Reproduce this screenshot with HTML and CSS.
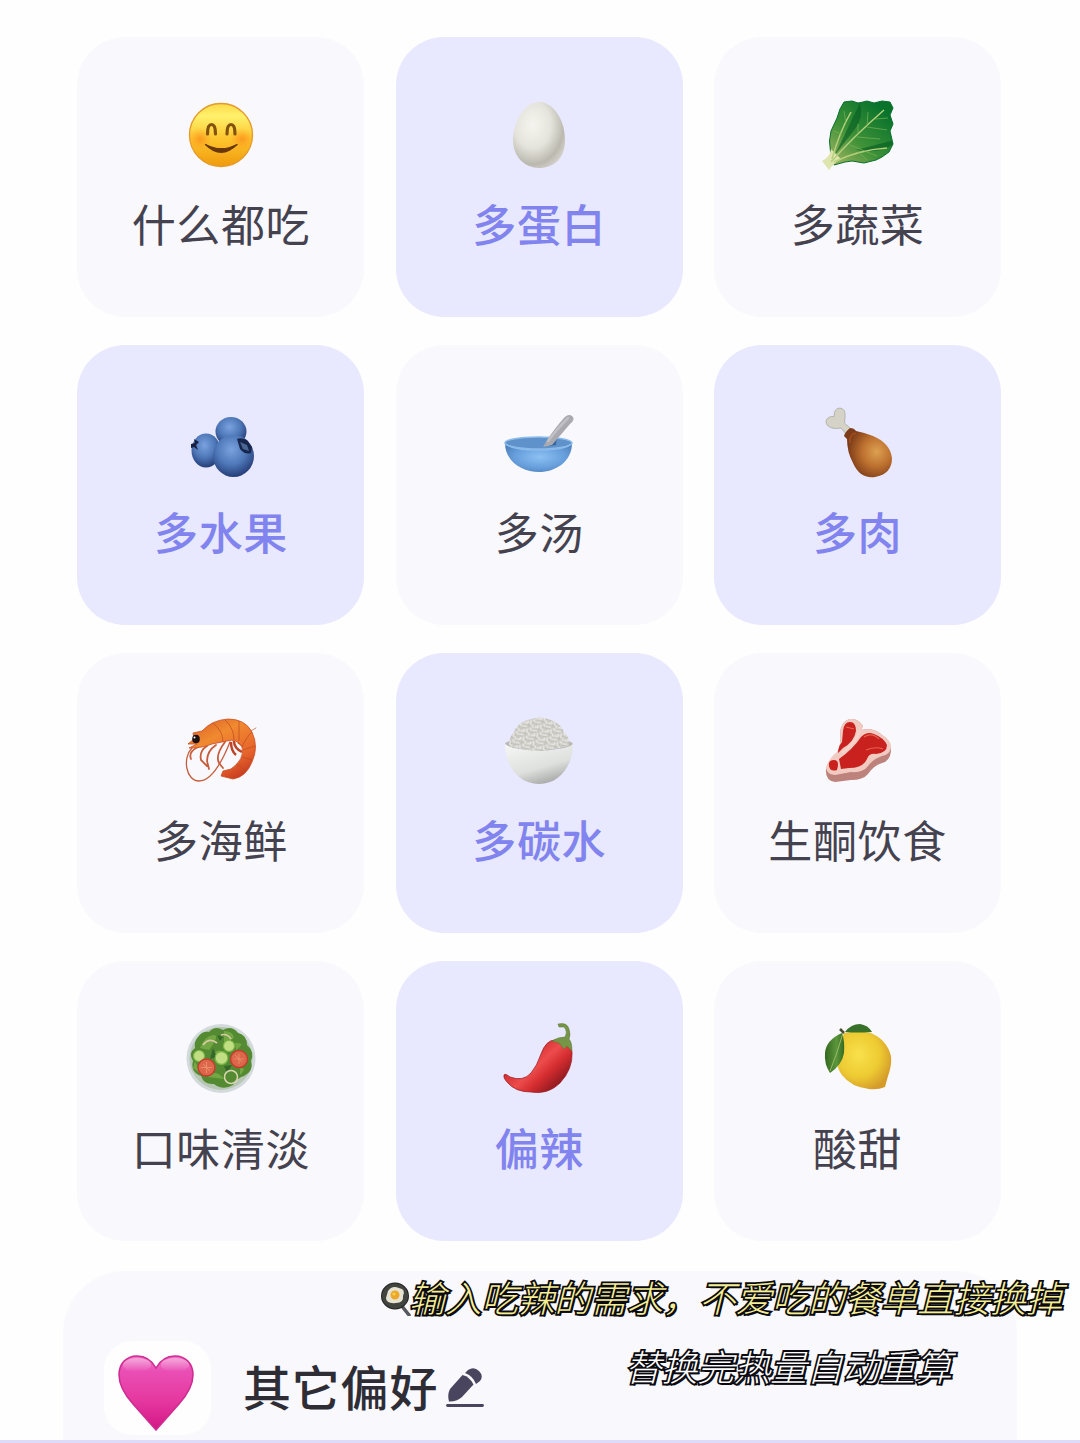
FILE: index.html
```
<!DOCTYPE html>
<html lang="zh-CN">
<head>
    <meta charset="UTF-8">
    <meta name="viewport" content="width=device-width, initial-scale=1.0">
    <title>饮食偏好</title>
    <link rel="stylesheet" href="styles.css">
</head>
<body>
    <div class="page">
        <div class="taste-grid">
            <div class="card">
                <svg class="icon" viewBox="0 0 72 72">
                    <defs>
                        <linearGradient id="face" x1="0" y1="0" x2="0" y2="1">
                            <stop offset="0" stop-color="#ffd94a"/>
                            <stop offset=".2" stop-color="#fff16c"/>
                            <stop offset=".55" stop-color="#fdc62f"/>
                            <stop offset="1" stop-color="#f09a0c"/>
                        </linearGradient>
                        <radialGradient id="blush">
                            <stop offset="0" stop-color="#fb8a1c" stop-opacity=".75"/>
                            <stop offset="1" stop-color="#ff9a1c" stop-opacity="0"/>
                        </radialGradient>
                    </defs>
                    <circle cx="36" cy="36" r="31.5" fill="url(#face)" stroke="#e59a28" stroke-width="1.3"/>
                    <ellipse cx="15" cy="40" rx="12" ry="11" fill="url(#blush)"/>
                    <ellipse cx="57" cy="40" rx="12" ry="11" fill="url(#blush)"/>
                    <path d="M22.500 35q0-9.500 4-9.500t4 9.500M42 35q0-9.500 4-9.500t4 9.500" fill="none" stroke="#84520f" stroke-width="3.200" stroke-linecap="round"/>
                    <path d="M20.500 45.500Q36 61 52 45.500 36 54 20.500 45.500Z" fill="#69380a" stroke="#69380a" stroke-width="1.300" stroke-linejoin="round"/>
                </svg>
                <p>什么都吃</p>
            </div>
            <div class="card active">
                <svg class="icon" viewBox="0 0 72 72">
                    <defs>
                        <radialGradient id="egg" cx=".38" cy=".35" r=".7">
                            <stop offset="0" stop-color="#f5f4ee"/>
                            <stop offset=".5" stop-color="#e5e4dc"/>
                            <stop offset=".85" stop-color="#bbb9af"/>
                            <stop offset="1" stop-color="#cfcdc6"/>
                        </radialGradient>
                    </defs>
                    <path d="M36 3C51 3 62 22 62 41S50 69 36 69 10 58 10 41 21 3 36 3Z" fill="url(#egg)"/>
                </svg>
                <p>多蛋白</p>
            </div>
            <div class="card">
                <svg class="icon" viewBox="0 0 72 72">
                    <defs>
                        <linearGradient id="leaf" x1=".1" y1=".9" x2=".8" y2=".1">
                            <stop offset="0" stop-color="#8fae5a"/>
                            <stop offset=".4" stop-color="#3f9238"/>
                            <stop offset="1" stop-color="#09732c"/>
                        </linearGradient>
                    </defs>
                    <path d="M8.500 53L7.500 42 9 32 15 19 18 10 22 3 30 2 36 4 41 3 45 2 52 4 60 2 68 3 71 9 68 16 71 25 68 32 71 45 67 53 60 58 54 61 42 64 30 62 23 63 12 66Z" fill="url(#leaf)" stroke="#08702b" stroke-width="1" stroke-linejoin="round"/>
                    <path d="M38 4Q42 18 33 30L12 57Q23 36 30 20ZM71 45Q60 55 34 51L69 42Z" fill="#075f24" opacity=".65"/>
                    <path d="M0 62Q8 58 9 50L19 60Q11 65 7 71Z" fill="#dfe5ae"/>
                    <path d="M9 63Q30 39 62 11M10 60Q17 34 29 13M12 63Q36 51 65 49" fill="none" stroke="#b4d07c" stroke-width="1.500"/>
                    <path d="M36 36L36 25M45 27L46 13M53 20L66 19M45 28L65 31M35 38L58 40M28 46L55 57M19 35L12 32M24 24L22 12M36 53L45 61" fill="none" stroke="#7bb256" stroke-width=".7"/>
                </svg>
                <p>多蔬菜</p>
            </div>

            <div class="card active">
                <svg class="icon" viewBox="0 0 72 72">
                    <defs>
                        <radialGradient id="berry" cx=".45" cy=".35" r=".65">
                            <stop offset="0" stop-color="#7aa2de"/>
                            <stop offset=".55" stop-color="#4f78b9"/>
                            <stop offset="1" stop-color="#263e78"/>
                        </radialGradient>
                    </defs>
                    <ellipse cx="46" cy="24.500" rx="15.500" ry="14.500" fill="url(#berry)"/>
                    <ellipse cx="21" cy="43.500" rx="14.500" ry="17" fill="url(#berry)"/>
                    <path d="M6 37l4-1-1-4 5 3-3 3 2 5-4-3-3 1Z" fill="#16203f"/>
                    <ellipse cx="48.500" cy="49" rx="20.500" ry="21" fill="url(#berry)"/>
                    <path d="M52 32Q56 30 62 33L67 40 66 46Q60 48 55 42Z" fill="#17264c"/>
                    <path d="M55 35l7 3 2 6-6-2Z" fill="#4a6693"/>
                </svg>
                <p>多水果</p>
            </div>
            <div class="card">
                <svg class="icon" viewBox="0 0 72 72">
                    <defs>
                        <radialGradient id="bowl" cx=".52" cy=".48" r=".62">
                            <stop offset="0" stop-color="#8cc1f3"/>
                            <stop offset=".6" stop-color="#679fdc"/>
                            <stop offset="1" stop-color="#4d7eb8"/>
                        </radialGradient>
                    </defs>
                    <path d="M2 36C2 55 20 65 36 65S69 55 69 36Z" fill="url(#bowl)"/>
                    <ellipse cx="35.500" cy="36" rx="33.500" ry="6" fill="#5f92cb" stroke="#8abbea" stroke-width="1.500"/>
                    <path d="M46 39L54 28 53 38Z" fill="#39669b"/>
                    <path d="M40 40Q47 27 60 12 65 6 69 9T67 17L49 38Z" fill="#aaa9b0"/>
                    <path d="M45 34Q54 22 65 11" fill="none" stroke="#c0bfc5" stroke-width="2.500" stroke-linecap="round"/>
                    <path d="M3 37Q10 43 36 43T68 37" fill="none" stroke="#8abbea" stroke-width="1.500"/>
                </svg>
                <p>多汤</p>
            </div>
            <div class="card active">
                <svg class="icon" viewBox="0 0 72 72">
                    <defs>
                        <radialGradient id="meat" cx=".68" cy=".48" r=".6">
                            <stop offset="0" stop-color="#dda052"/>
                            <stop offset=".5" stop-color="#bd712f"/>
                            <stop offset="1" stop-color="#7c3b19"/>
                        </radialGradient>
                    </defs>
                    <path d="M25 28L19 21Q14 22 10 21 4 19 4 14.500 5 9 12 9.500 12 1 18 1 24 2 23 10L22.500 16 31 24Z" fill="#d5d3c7" stroke="#aba99f" stroke-width=".8"/>
                    <path d="M28 21Q32 21 34 24 44 26 51 29 68 36 70 51 70 67 53 70 38 72 31 56 25 45 25 32L22 29Q23 25 28 21Z" fill="url(#meat)"/>
                    <path d="M34 26Q27 27 28 36" fill="none" stroke="#9b4a1d" stroke-width="2"/>
                </svg>
                <p>多肉</p>
            </div>

            <div class="card">
                <svg class="icon" viewBox="0 0 72 72">
                    <defs>
                        <linearGradient id="shrimp" x1=".2" y1="0" x2=".8" y2="1">
                            <stop offset="0" stop-color="#dc6428"/>
                            <stop offset=".3" stop-color="#f08a30"/>
                            <stop offset=".7" stop-color="#e7652b"/>
                            <stop offset="1" stop-color="#c43820"/>
                        </linearGradient>
                    </defs>
                    <g fill="none" stroke="#c65e3e" stroke-width="1.300" stroke-linecap="round">
                        <path d="M7 33C-3 43 1 66 14 66S37 47 45 27"/>
                        <path d="M13 32Q3 37 6 44M22 31Q14 36 16 45L22 51M31 30Q22 36 22 46L24 54M40 27Q30 40 34 48L38 53" stroke-width="1.800"/>
                        <path d="M60 19L71 13" stroke-width=".7"/>
                    </g>
                    <path d="M46 27Q46 36 51 40M49 26Q49 33 57 37M53 27L60 32" stroke="#bd4326" stroke-width="2.500" fill="none"/>
                    <path d="M3 29L9 24 8 18 17 16Q27 5 43 4 60 4 67 17 74 32 67 47 61 62 48 64L36 61 38 56 46 54Q60 44 57 32 52 23 42 26L27 29Q18 33 4 33L12 29Z" fill="url(#shrimp)" stroke="#cc4d23" stroke-width=".8" stroke-linejoin="round"/>
                    <path d="M28 8Q38 16 38 27M40 5Q49 13 49 25M54 6Q54 17 54 26M67 17Q62 21 57 32M70 31L58 35M67 45L57 42M61 56L51 49" fill="none" stroke="#bd4a20" stroke-width=".7"/>
                    <ellipse cx="11" cy="24" rx="3.800" ry="4.300" fill="#1c1013"/>
                    <circle cx="9.500" cy="22.500" r="1" fill="#fff"/>
                </svg>
                <p>多海鲜</p>
            </div>
            <div class="card active">
                <svg class="icon" viewBox="0 0 72 72">
                    <defs>
                        <linearGradient id="rice-bowl" x1=".2" y1="0" x2=".7" y2="1">
                            <stop offset="0" stop-color="#f4f5f3"/>
                            <stop offset=".6" stop-color="#dde0dd"/>
                            <stop offset="1" stop-color="#a3a4a1"/>
                        </linearGradient>
                        <pattern id="grains" width="11" height="9" patternUnits="userSpaceOnUse" patternTransform="rotate(24)">
                            <rect width="11" height="9" fill="#cac9c3"/>
                            <path d="M1 2l3-1M6 3l1 3M1 7l3-1M8 1l2 1M9 6l1 2M3 4l1 1" stroke="#e9e8e3" stroke-width="1.600" stroke-linecap="round"/>
                            <path d="M1 3.500l3-1M8 4l1 1M5 7l2 1" stroke="#a9a79f" stroke-width=".6"/>
                        </pattern>
                    </defs>
                    <ellipse cx="36" cy="29" rx="34" ry="6" fill="#b9bab7"/>
                    <path d="M6 31Q6 22 11 17 15 7 25 5 37 0 48 5 59 9 61 18 67 21 66 31L36 38Z" fill="url(#grains)"/>
                    <path d="M2 29Q10 36 36 36T70 29C70 50 57 69 36 69S2 50 2 29Z" fill="url(#rice-bowl)"/>
                </svg>
                <p>多碳水</p>
            </div>
            <div class="card">
                <svg class="icon" viewBox="0 0 72 72">
                    <path d="M4 54Q8 43 15 38 20 28 18 16 21 5 28 4 36 3 41 11L39 15Q52 12 60 20 69 25 69 36 68 46 60 48 51 51 46 59 41 65 29 65L13 67Q3 66 4 54Z" fill="#bd827b"/>
                    <path d="M4 52Q8 42 15 37 20 28 18 16 21 5 28 4 36 3 41 11L39 15Q52 12 60 20 69 25 69 32 68 40 60 41 51 44 46 51 41 58 29 57L13 60Q4 59 4 52Z" fill="#f1cbc2"/>
                    <path d="M21 16Q22 7 28 7T34 16Q32 27 21 33L16 38Q16 32 20 27ZM17 44Q31 34 39 22 45 16 52 19 62 23 65 30 65 38 54 39 47 38 45 44 41 53 27 53L19 54ZM7 51Q6 45 12 45T15 55Q8 57 7 51Z" fill="#c8211e"/>
                    <path d="M42 22Q50 17 57 24M44 35Q54 31 61 34M24 12L32 14" fill="none" stroke="#e86251" stroke-width="1.100"/>
                    <path d="M38 15Q34 28 20 38" fill="none" stroke="#f6d4ca" stroke-width="2.500"/>
                </svg>
                <p>生酮饮食</p>
            </div>

            <div class="card">
                <svg class="icon" viewBox="0 0 72 72">
                    <circle cx="36" cy="35.500" r="34.500" fill="#d3dadb"/>
                    <circle cx="36" cy="35.500" r="31.500" fill="#b8c7b4"/>
                    <path d="M13 14Q17 8 24 9 30 2 38 7 47 2 53 10 62 12 62 22 70 29 66 38 69 48 59 53 52 55 48 62 38 68 29 61 19 62 16 53 5 49 8 38 3 30 10 25 9 18 13 14Z" fill="#548b32"/>
                    <path d="M15 25Q20 13 28 12T24 27ZM39 8Q48 8 49 15L39 22ZM27 32Q33 24 39 30ZM23 54Q31 45 39 56ZM55 45Q63 44 55 52ZM50 20Q62 19 51 27ZM10 38L16 51 8 45Z" fill="#72a743"/>
                    <path d="M28 25L32 34 25 36ZM39 43L47 42 42 50ZM32 12L38 14 35 18Z" fill="#34682a"/>
                    <g fill="#c1df82" stroke="#80b74a" stroke-width="1.200">
                        <circle cx="14" cy="33" r="5.500"/>
                        <circle cx="44" cy="23" r="5.500"/>
                        <circle cx="36.500" cy="35" r="6.300"/>
                    </g>
                    <g fill="#dd674a" stroke="#c43e2f" stroke-width="1.500">
                        <circle cx="21.500" cy="44.500" r="8.500"/>
                        <circle cx="54" cy="36" r="8.500"/>
                    </g>
                    <path d="M21.500 39v11M16 44.500h11M18 41l7 7M54 31v10M49 36h10M50 32l7 7" stroke="#ee9471" stroke-width=".8"/>
                    <circle cx="46" cy="54" r="6.500" fill="none" stroke="#d9d5af" stroke-width="1.500"/>
                    <path d="M18 22Q24 14 32 20M36 12Q42 10 46 16" fill="none" stroke="#d9c9a5" stroke-width="1.600"/>
                </svg>
                <p>口味清淡</p>
            </div>
            <div class="card active">
                <svg class="icon" viewBox="0 0 72 72">
                    <defs>
                        <linearGradient id="chili" x1=".2" y1=".3" x2=".8" y2=".8">
                            <stop offset="0" stop-color="#c8242a"/>
                            <stop offset=".45" stop-color="#ed4c4b"/>
                            <stop offset=".7" stop-color="#d52d30"/>
                            <stop offset="1" stop-color="#981c22"/>
                        </linearGradient>
                    </defs>
                    <path d="M1 52Q2 50 7 54 20 59 28 50 34 43 38 31 43 17 52 17 67 18 69 29 70 46 57 60 45 72 28 69 12 69 4 59 0 55 1 52Z" fill="url(#chili)" stroke="#9d2025" stroke-width=".8"/>
                    <path d="M49 18Q55 14 62 14 65 8 61 4L56 4 55 1Q64-1 66 6 68 12 66 16 69 19 69 28L64 23 61 26 56 20Z" fill="#779547" stroke="#567632" stroke-width=".5"/>
                </svg>
                <p>偏辣</p>
            </div>
            <div class="card">
                <svg class="icon" viewBox="0 0 72 72">
                    <defs>
                        <radialGradient id="lemon" cx=".4" cy=".4" r=".65">
                            <stop offset="0" stop-color="#f9e14c"/>
                            <stop offset=".6" stop-color="#edca32"/>
                            <stop offset="1" stop-color="#d49b29"/>
                        </radialGradient>
                        <linearGradient id="lemon-leaf">
                            <stop offset="0" stop-color="#34671f"/>
                            <stop offset=".6" stop-color="#5b963b"/>
                            <stop offset="1" stop-color="#356a22"/>
                        </linearGradient>
                    </defs>
                    <path d="M22 10Q37 7 49 10 65 17 69 33 70 42 66 53L63 64Q56 67 47 66 29 64 20 52 12 42 17 25Z" fill="url(#lemon)"/>
                    <path d="M23 9Q29 1 38 1 46 2 50 9Q34 10 23 9Z" fill="#39712a"/>
                    <path d="M20 10Q4 17 3 30 2 41 8 50 20 42 22 30 23 18 20 10Z" fill="url(#lemon-leaf)"/>
                    <path d="M18 6L21 10Q15 31 8 48" fill="none" stroke="#a4bd6b" stroke-width=".9"/>
                    <path d="M18 6L22 10" stroke="#4b4930" stroke-width="2.500"/>
                </svg>
                <p>酸甜</p>
            </div>
        </div>

        <div class="other">
            <div class="heart-box">
                <svg class="heart" viewBox="0 0 76 76">
                    <defs>
                        <linearGradient id="pink" x1="0" y1="0" x2="0" y2="1">
                            <stop offset="0" stop-color="#ef72c6"/>
                            <stop offset=".2" stop-color="#ea4fb5"/>
                            <stop offset=".6" stop-color="#e5389f"/>
                            <stop offset="1" stop-color="#d41685"/>
                        </linearGradient>
                        <linearGradient id="shine" x1="0" y1="0" x2="0" y2="1">
                            <stop offset="0" stop-color="#fff" stop-opacity=".4"/>
                            <stop offset="1" stop-color="#fff" stop-opacity="0"/>
                        </linearGradient>
                    </defs>
                    <path d="M38 13C43 4 49 1 57 1 68 1 75 9 75 20 75 31 69 40 61 49L38 75 15 49C7 40 1 31 1 20 1 9 8 1 19 1 27 1 33 4 38 13Z" fill="url(#pink)" stroke="#cd2b91" stroke-width="1.500"/>
                    <ellipse cx="19" cy="10" rx="14" ry="7" fill="url(#shine)"/>
                    <ellipse cx="57" cy="10" rx="14" ry="7" fill="url(#shine)"/>
                </svg>
            </div>
            <h2>其它偏好</h2>
            <svg class="pen" viewBox="0 0 38 40">
                <path d="M16.500 7Q24 9 27.500 16.500L16 29Q10 34 3 33.500 1 27 4 21Z" fill="#4a455f"/>
                <path d="M19 5L22 2Q28-2 33 3 38 8 34 13L30 16Q27 8 19 5Z" fill="#4a455f"/>
                <path d="M1.500 37.500H36.500" stroke="#4a455f" stroke-width="2.800" stroke-linecap="round"/>
            </svg>
        </div>

        <div class="caption caption-yellow">
            <svg class="pan" viewBox="0 0 30 34">
                <path d="M20 23L28 33" stroke="#55585c" stroke-width="3.500" stroke-linecap="round"/>
                <ellipse cx="14" cy="14" rx="13" ry="12.500" fill="#42453f" stroke="#20221f" stroke-width="2"/>
                <path d="M7 9Q11 3 18 6 25 7 22 14 23 21 15 21 5 22 5 16Z" fill="#e6e3d3"/>
                <circle cx="14" cy="13" r="4.500" fill="#eca928"/>
                <circle cx="13" cy="12" r="1.500" fill="#f8d156"/>
            </svg>
            <span>输入吃辣的需求，不爱吃的餐单直接换掉</span>
        </div>
        <div class="caption caption-white">替换完热量自动重算</div>
        <div class="bottom-line"></div>
    </div>
</body>
</html>
```
FILE: styles.css
```
* {
    margin: 0;
    padding: 0;
    box-sizing: border-box;
    font-family: 'Noto Sans CJK SC', sans-serif;
}

body {
    background: #fefefe;
}

.page {
    position: relative;
    height: 1443px;
    padding: 37px 63px 0;
    overflow: hidden;
}

.taste-grid {
    display: grid;
    grid-template-columns: repeat(3, 287px);
    grid-auto-rows: 279.5px;
    gap: 28.5px 31.3px;
    justify-content: center;
    margin-left: -1.5px;
}

.card {
    display: flex;
    flex-direction: column;
    align-items: center;
    padding-top: 62px;
    border-radius: 48px;
    background: #f9f8fd;
    color: #45424f;
}

.card.active {
    background: #e8e8fe;
    color: #8183ee;
}

.icon {
    width: 72px;
    height: 72px;
    overflow: visible;
}

.card p {
    margin-top: 20px;
    font-size: 44px;
    line-height: 64px;
    letter-spacing: 0.6px;
    white-space: nowrap;
}

.card.active p {
    font-weight: 500;
}

.other {
    display: flex;
    align-items: flex-start;
    height: 200px;
    margin-top: 30px;
    padding: 70px 0 0 41px;
    border-radius: 62px 62px 0 0;
    background: #f9f8fd;
}

.heart-box {
    display: flex;
    justify-content: center;
    width: 107px;
    height: 94px;
    padding: 14px 3px 0 0;
    border-radius: 28px;
    background: #fefefe;
}

.heart {
    width: 76px;
    height: 76px;
}

.other h2 {
    margin: 9px 0 0 32px;
    font-size: 48px;
    font-weight: 500;
    line-height: 70px;
    letter-spacing: 0.8px;
    color: #2e2d35;
}

.pen {
    width: 38px;
    height: 40px;
    margin: 27px 0 0 8px;
}

/* captions lie over the page */
.caption {
    position: absolute;
    display: flex;
    align-items: center;
    font-size: 36.3px;
    font-style: italic;
    font-weight: 300;
    line-height: 50px;
    white-space: nowrap;
    -webkit-text-stroke: 3.6px #0b0a10;
    paint-order: stroke fill;
    text-shadow: 2px 2px 0 #0b0a10;
}

.caption-yellow {
    top: 1271px;
    left: 381px;
    color: #f5ee94;
}

.caption-white {
    top: 1340px;
    left: 625px;
    color: #fff;
}

.pan {
    width: 30px;
    height: 34px;
    margin-top: 6px;
}

.caption-yellow span {
    margin-left: -2px;
}

.bottom-line {
    position: absolute;
    left: 0;
    right: 0;
    bottom: 0;
    height: 3px;
    background: #dedafa;
}
```
